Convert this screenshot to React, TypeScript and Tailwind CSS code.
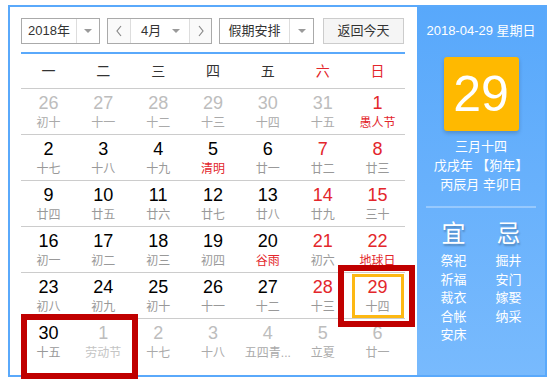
import React from "react";

type Cell = { d: string; l: string; dim?: boolean; red?: boolean; lred?: boolean; ldim?: boolean; today?: boolean };

const rows: Cell[][] = [
  [
    { d: "26", l: "初十", dim: true },
    { d: "27", l: "十一", dim: true },
    { d: "28", l: "十二", dim: true },
    { d: "29", l: "十三", dim: true },
    { d: "30", l: "十四", dim: true },
    { d: "31", l: "十五", dim: true },
    { d: "1", l: "愚人节", red: true, lred: true },
  ],
  [
    { d: "2", l: "十七" },
    { d: "3", l: "十八" },
    { d: "4", l: "十九" },
    { d: "5", l: "清明", lred: true },
    { d: "6", l: "廿一" },
    { d: "7", l: "廿二", red: true },
    { d: "8", l: "廿三", red: true },
  ],
  [
    { d: "9", l: "廿四" },
    { d: "10", l: "廿五" },
    { d: "11", l: "廿六" },
    { d: "12", l: "廿七" },
    { d: "13", l: "廿八" },
    { d: "14", l: "廿九", red: true },
    { d: "15", l: "三十", red: true },
  ],
  [
    { d: "16", l: "初一" },
    { d: "17", l: "初二" },
    { d: "18", l: "初三" },
    { d: "19", l: "初四" },
    { d: "20", l: "谷雨", lred: true },
    { d: "21", l: "初六", red: true },
    { d: "22", l: "地球日", red: true, lred: true },
  ],
  [
    { d: "23", l: "初八" },
    { d: "24", l: "初九" },
    { d: "25", l: "初十" },
    { d: "26", l: "十一" },
    { d: "27", l: "十二" },
    { d: "28", l: "十三", red: true },
    { d: "29", l: "十四", red: true, today: true },
  ],
  [
    { d: "30", l: "十五" },
    { d: "1", l: "劳动节", dim: true, ldim: true },
    { d: "2", l: "十七", dim: true },
    { d: "3", l: "十八", dim: true },
    { d: "4", l: "五四青...", dim: true },
    { d: "5", l: "立夏", dim: true },
    { d: "6", l: "廿一", dim: true },
  ],
];

const weekdays = ["一", "二", "三", "四", "五", "六", "日"];

function Arrow() {
  return <span className="inline-block w-0 h-0 border-l-[4px] border-r-[4px] border-t-[4px] border-l-transparent border-r-transparent border-t-[#9a9a9a]" />;
}

export default function App() {
  return (
    <div
      className="relative w-[557px] h-[382px] bg-white pt-[5px] pl-[8px]"
      style={{ fontFamily: '"Liberation Sans", "Noto Sans CJK SC", sans-serif' }}
    >
      <div className="flex w-[539px] h-[372px] border-2 border-[#5aa9fb]">
        {/* Left */}
        <div className="w-[407px] pt-[11px] pl-[11px] pr-[12px] bg-white">
          {/* toolbar */}
          <div className="flex items-center h-[26px] text-[13px] text-[#333]">
            <div className="flex h-[26px] w-[79px] border border-[#aaa]">
              <div className="w-[54px] flex items-center justify-center">2018年</div>
              <div className="flex-1 flex items-center justify-center border-l border-[#ddd]">
                <Arrow />
              </div>
            </div>
            <div className="flex h-[26px] w-[105px] ml-[7px] border border-[#aaa]">
              <div className="w-[22px] flex items-center justify-center text-[#888] bg-[#fafafa]">
                <svg width="8" height="12" viewBox="0 0 8 12"><path d="M6 1 L2 6 L6 11" fill="none" stroke="#888" strokeWidth="1.2" /></svg>
              </div>
              <div className="w-[60px] flex items-center border-l border-r border-[#ddd]">
                <span className="ml-[10px]">4月</span>
                <span className="ml-auto mr-[9px] flex"><Arrow /></span>
              </div>
              <div className="flex-1 flex items-center justify-center bg-[#fafafa]">
                <svg width="8" height="12" viewBox="0 0 8 12"><path d="M2 1 L6 6 L2 11" fill="none" stroke="#888" strokeWidth="1.2" /></svg>
              </div>
            </div>
            <div className="flex h-[26px] w-[95px] ml-[7px] border border-[#aaa]">
              <div className="w-[69px] flex items-center justify-center">假期安排</div>
              <div className="flex-1 flex items-center justify-center border-l border-[#ddd]">
                <Arrow />
              </div>
            </div>
            <div className="flex h-[26px] w-[81px] ml-[9px] items-center justify-center border border-[#ccc] bg-[#f5f5f5]">
              返回今天
            </div>
          </div>
          <div className="mt-[8px] h-[2px] bg-[#5aa9fb]" />
          {/* header */}
          <div className="flex h-[35px] border-b border-[#ccc] text-[14px]">
            {weekdays.map((w, i) => (
              <div key={w} className={`flex-1 flex items-center justify-center ${i >= 5 ? "text-[#e3262b]" : "text-[#333]"}`}>
                {w}
              </div>
            ))}
          </div>
          {rows.map((r, ri) => (
            <div key={ri} className={`flex h-[46px] ${ri < 5 ? "border-b border-[#ccc]" : ""}`}>
              {r.map((c, ci) => (
                <div key={ci} className="relative flex-1 flex flex-col items-center pt-[4px]">
                  {c.today && (
                    <div className="absolute left-[2px] right-[1px] top-[1px] bottom-[0px] border-[3px] border-[#fdb813]" />
                  )}
                  <div
                    className={`text-[18px] leading-[20px] ${
                      c.dim ? "text-[#bdbdbd]" : c.red ? "text-[#e3262b]" : "text-black"
                    }`}
                  >
                    {c.d}
                  </div>
                  <div
                    className={`mt-[2px] text-[12px] leading-[16px] whitespace-nowrap ${
                      c.lred ? "text-[#e3262b]" : c.ldim ? "text-[#c4c4c4]" : c.dim ? "text-[#aaa]" : "text-[#999]"
                    }`}
                  >
                    {c.l}
                  </div>
                </div>
              ))}
            </div>
          ))}
        </div>
        {/* Right */}
        <div className="w-[128px] flex flex-col items-center bg-gradient-to-b from-[#58a8fb] to-[#78bafd] text-white text-[13px]">
          <div className="mt-[15px] leading-[18px] whitespace-nowrap">2018-04-29 星期日</div>
          <div className="mt-[17px] w-[75px] h-[74px] rounded-[3px] bg-[#ffb900] flex items-center justify-center text-[50px] leading-none shadow-[0_2px_4px_rgba(0,0,0,0.2)]">
            29
          </div>
          <div className="mt-[6px] leading-[19px]">三月十四</div>
          <div className="leading-[19px] whitespace-nowrap">戊戌年 【狗年】</div>
          <div className="leading-[19px] whitespace-nowrap">丙辰月 辛卯日</div>
          <div className="mt-[12px] w-[110px] h-[2px] bg-white/30" />
          <div className="mt-[12px] flex gap-[15px]">
            <div className="w-[40px] flex flex-col items-center">
              <div className="text-[24px] leading-[28px] [text-shadow:1px_2px_2px_rgba(0,0,0,0.25)]">宜</div>
              <div className="mt-[4px] flex flex-col items-center leading-[18.5px]">
                <span>祭祀</span>
                <span>祈福</span>
                <span>裁衣</span>
                <span>合帐</span>
                <span>安床</span>
              </div>
            </div>
            <div className="w-[40px] flex flex-col items-center">
              <div className="text-[24px] leading-[28px] [text-shadow:1px_2px_2px_rgba(0,0,0,0.25)]">忌</div>
              <div className="mt-[4px] flex flex-col items-center leading-[18.5px]">
                <span>掘井</span>
                <span>安门</span>
                <span>嫁娶</span>
                <span>纳采</span>
              </div>
            </div>
          </div>
        </div>
      </div>
      {/* annotation boxes */}
      <div className="absolute left-[338px] top-[265px] w-[77px] h-[62px] border-[6px] border-[#c00000]" />
      <div className="absolute left-[21px] top-[314px] w-[117px] h-[65px] border-[6px] border-[#c00000]" />
    </div>
  );
}
